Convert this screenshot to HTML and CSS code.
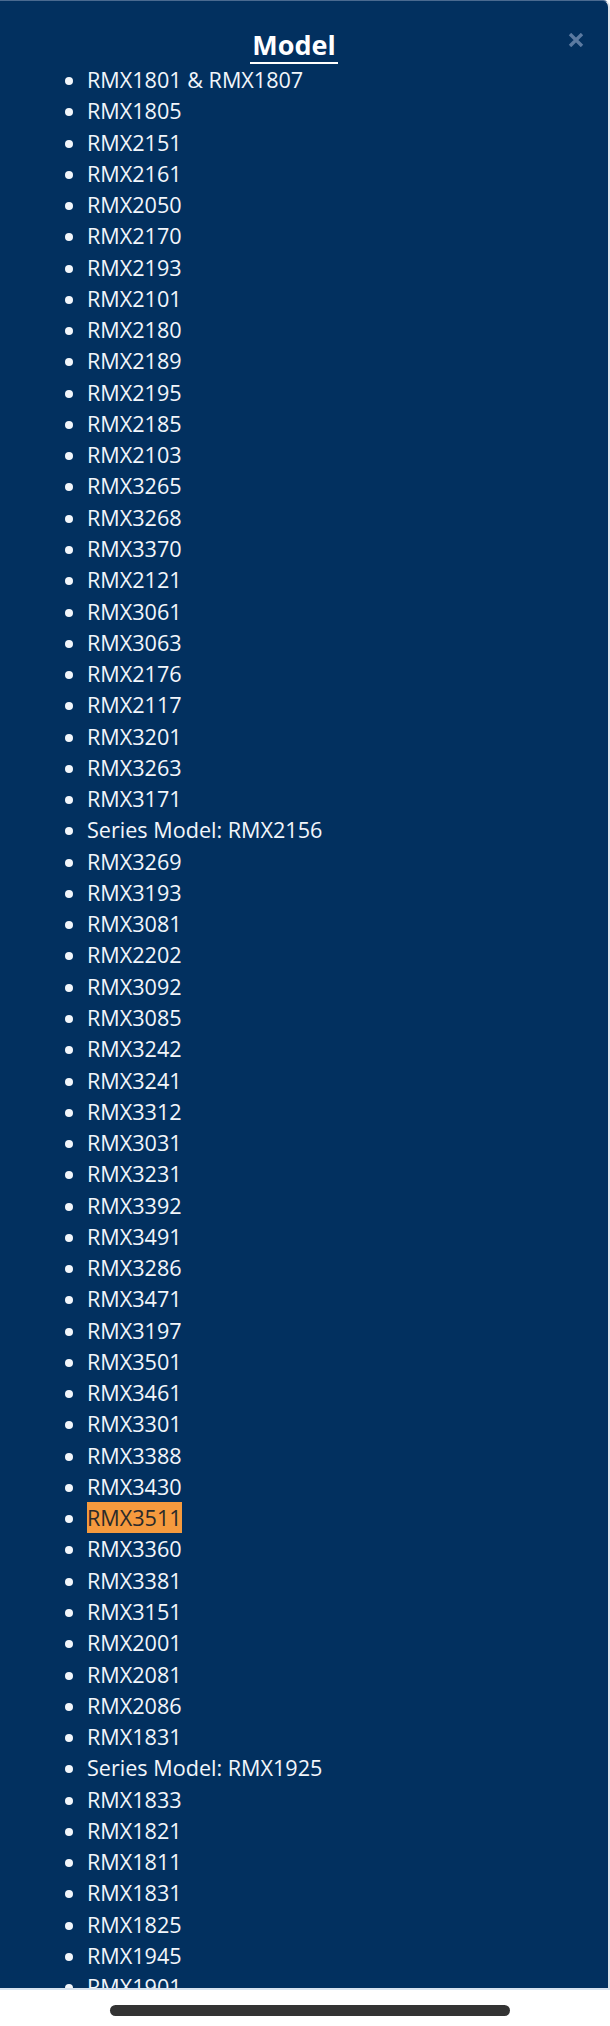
FILE: index.html
```html
<!DOCTYPE html>
<html lang="en">
<head>
    <meta charset="UTF-8">
    <meta name="viewport" content="width=device-width, initial-scale=1.0">
    <title>Model</title>
    <link rel="stylesheet" href="styles.css">
</head>
<body>
    <div class="screen">
        <div class="modal">
            <span class="close-btn">
                <svg width="16" height="14" viewBox="0 0 16 14"><path d="M2 1 L14 13 M14 1 L2 13" stroke="currentColor" stroke-width="3.4" stroke-linecap="butt"/></svg>
            </span>
            <h2 class="modal-title"><span>Model</span></h2>
            <ul class="model-list">
                <li>RMX1801 &amp; RMX1807</li>
                <li>RMX1805</li>
                <li>RMX2151</li>
                <li>RMX2161</li>
                <li>RMX2050</li>
                <li>RMX2170</li>
                <li>RMX2193</li>
                <li>RMX2101</li>
                <li>RMX2180</li>
                <li>RMX2189</li>
                <li>RMX2195</li>
                <li>RMX2185</li>
                <li>RMX2103</li>
                <li>RMX3265</li>
                <li>RMX3268</li>
                <li>RMX3370</li>
                <li>RMX2121</li>
                <li>RMX3061</li>
                <li>RMX3063</li>
                <li>RMX2176</li>
                <li>RMX2117</li>
                <li>RMX3201</li>
                <li>RMX3263</li>
                <li>RMX3171</li>
                <li>Series Model: RMX2156</li>
                <li>RMX3269</li>
                <li>RMX3193</li>
                <li>RMX3081</li>
                <li>RMX2202</li>
                <li>RMX3092</li>
                <li>RMX3085</li>
                <li>RMX3242</li>
                <li>RMX3241</li>
                <li>RMX3312</li>
                <li>RMX3031</li>
                <li>RMX3231</li>
                <li>RMX3392</li>
                <li>RMX3491</li>
                <li>RMX3286</li>
                <li>RMX3471</li>
                <li>RMX3197</li>
                <li>RMX3501</li>
                <li>RMX3461</li>
                <li>RMX3301</li>
                <li>RMX3388</li>
                <li>RMX3430</li>
                <li><span class="highlight">RMX3511</span></li>
                <li>RMX3360</li>
                <li>RMX3381</li>
                <li>RMX3151</li>
                <li>RMX2001</li>
                <li>RMX2081</li>
                <li>RMX2086</li>
                <li>RMX1831</li>
                <li>Series Model: RMX1925</li>
                <li>RMX1833</li>
                <li>RMX1821</li>
                <li>RMX1811</li>
                <li>RMX1831</li>
                <li>RMX1825</li>
                <li>RMX1945</li>
                <li>RMX1901</li>
            </ul>
        </div>
        <div class="home-bar"><span></span></div>
    </div>
</body>
</html>
```

FILE: styles.css
```css
body {
    margin: 0;
    background: #fff;
    font-family: 'Open Sans', 'Noto Sans', sans-serif;
}
.screen {
    width: 610px;
    height: 2026px;
    overflow: hidden;
    display: flex;
    flex-direction: column;
}
.modal {
    position: relative;
    box-sizing: border-box;
    width: 610px;
    height: 1990px;
    flex-shrink: 0;
    overflow: hidden;
    background: #02305f;
    color: #f2f6fb;
    border-top: 1px solid #4a6a90;
    border-right: 2px solid #dfe4ea;
    border-bottom: 2px solid #d8e3ef;
    border-top-right-radius: 7px;
    padding-top: 30px;
}
.close-btn {
    position: absolute;
    top: 32px;
    left: 568px;
    color: #5b7aa1;
    line-height: 0;
}
.modal-title {
    margin: 0;
    padding-right: 20px;
    text-align: center;
    font-size: 27px;
    line-height: 27px;
    font-weight: 700;
    color: #fff;
}
.modal-title span {
    display: inline-block;
    padding: 0 2px 4px;
    border-bottom: 2px solid #fff;
}
.model-list {
    margin: 0;
    padding-left: 87px;
    list-style: disc;
    font-size: 21.6px;
    line-height: 31.27px;
}
.highlight {
    background: #f59a3e;
    color: #2a2a2a;
    padding: 1px 0;
}
.home-bar {
    flex: 1;
    display: flex;
    justify-content: center;
    padding: 15px 0 0 10px;
    background: #fff;
}
.home-bar span {
    display: block;
    width: 400px;
    height: 11px;
    border-radius: 6px;
    background: #333;
}
```
